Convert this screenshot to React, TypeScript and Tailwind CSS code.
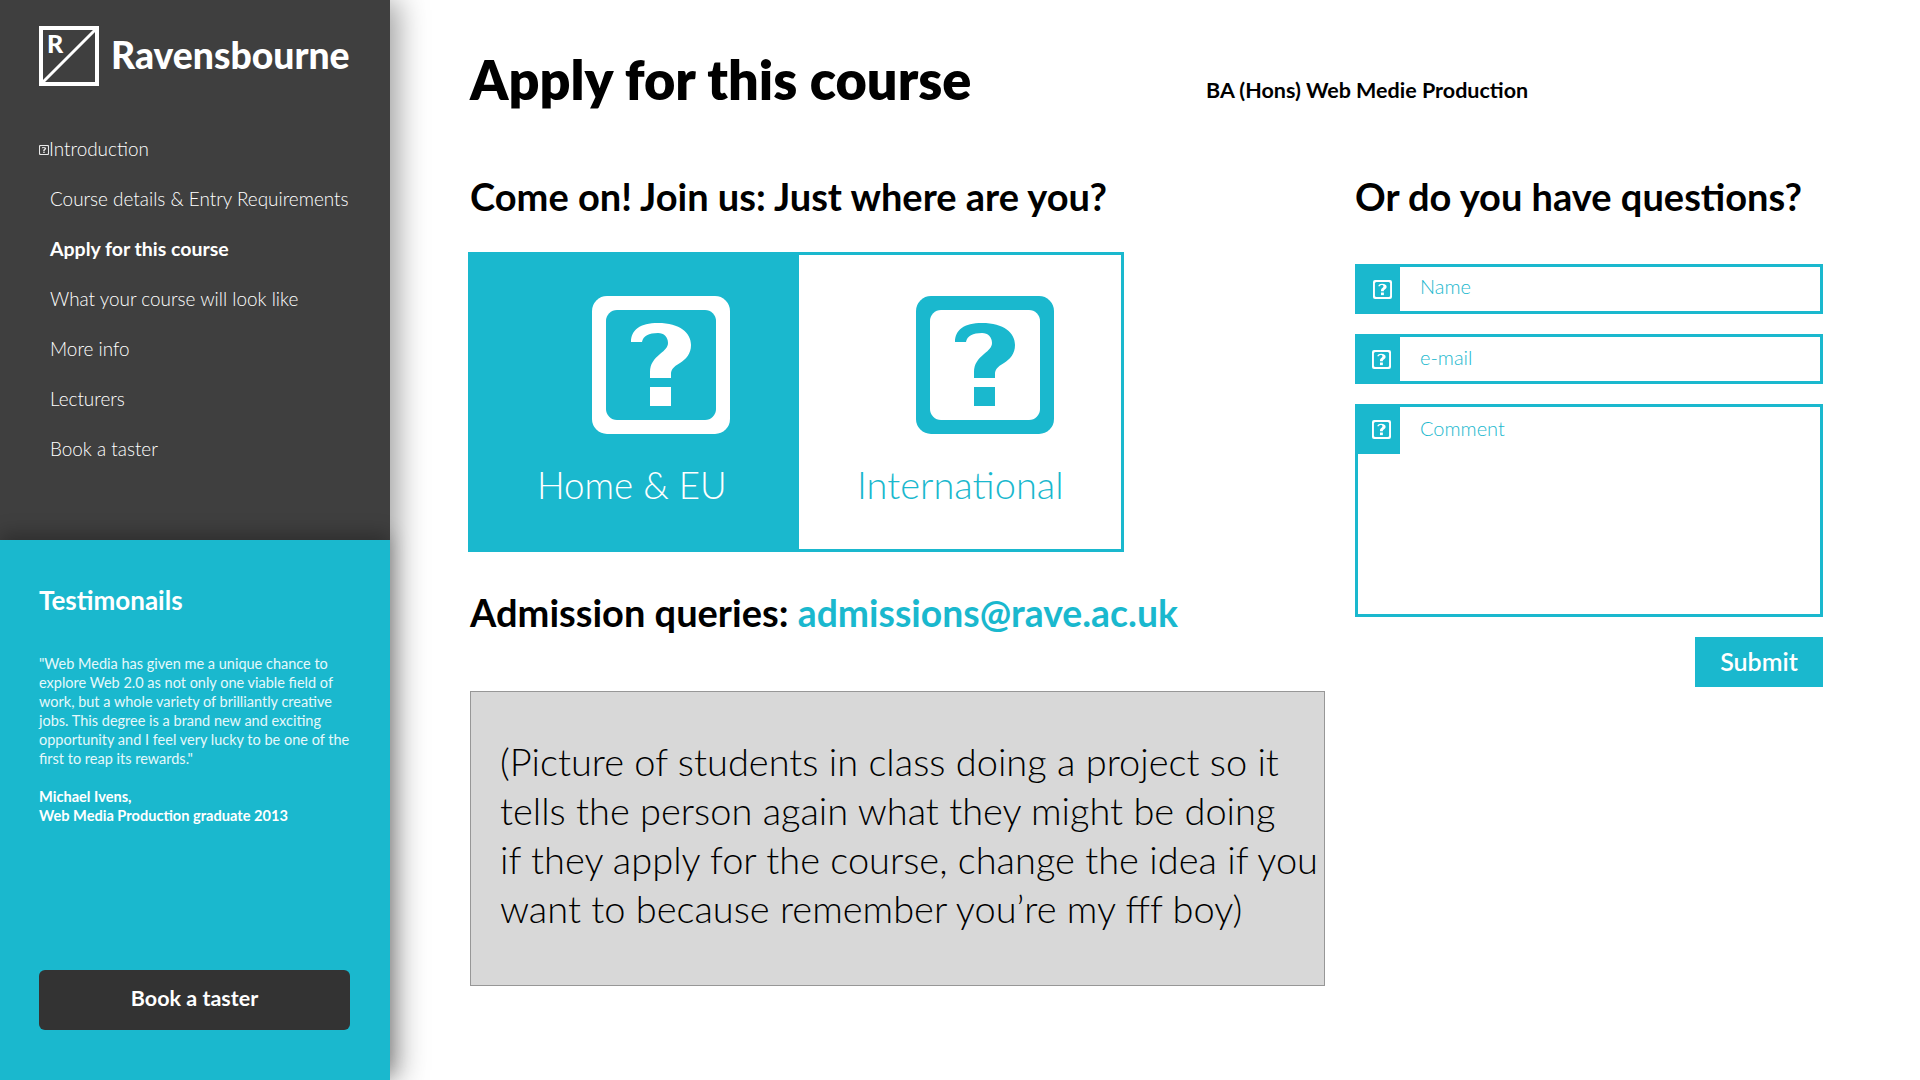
const NAV_ITEMS = [
  "Introduction",
  "Course details & Entry Requirements",
  "Apply for this course",
  "What your course will look like",
  "More info",
  "Lecturers",
  "Book a taster",
];

function QuestionIcon({ frame, glyph, className }: { frame: string; glyph: string; className: string }) {
  return (
    <svg viewBox="0 0 138 138" className={className}>
      <rect width="138" height="138" rx="15" fill={frame} />
      <rect x="14" y="14" width="110" height="110" rx="11" fill={glyph} />
      <path
        d="M39 46C39 34 48 27 66 27C88 27 99 37 99 49C99 58 94 63 88 67C81 71 79 74 79 78V82H58V76C58 68 62 63 68 58C73 54 76 51 76 47C76 41 72 37 66 37C57 37 51 40 50 46Z"
        fill={frame}
      />
      <rect x="58" y="91" width="21" height="19" fill={frame} />
    </svg>
  );
}

function Logo() {
  return (
    <svg viewBox="0 0 60 60" className="h-[60px] w-[60px] shrink-0">
      <rect x="2" y="2" width="56" height="56" fill="none" stroke="#fff" strokeWidth="4" />
      <path d="M3 57L57 3" stroke="#fff" strokeWidth="3" />
      <text x="8" y="27" fill="#fff" fontSize="25" fontWeight="900" fontFamily="Lato, sans-serif">
        R
      </text>
    </svg>
  );
}

function Sidebar() {
  return (
    <aside className="relative z-10 flex h-full w-[390px] shrink-0 flex-col shadow-[8px_0_28px_rgba(0,0,0,0.38)]">
      <div className="h-[540px] bg-[#3f3f3f] pl-[39px] pr-[30px] pt-[26px]">
        <div className="flex items-center gap-[12px]">
          <Logo />
          <span className="-mt-[2px] text-[37.3px] font-black leading-none text-white">Ravensbourne</span>
        </div>
        <nav className="mt-[38px] flex flex-col">
          {NAV_ITEMS.map((item, i) => (
            <a
              key={item}
              className={`flex h-[50px] items-center whitespace-nowrap text-white ${
                item === "Apply for this course" ? "text-[19.5px] font-bold" : "text-[18.9px] font-light"
              } ${i === 0 ? "" : "pl-[11px]"}`}
            >
              {i === 0 && <QuestionIcon frame="#e8e8e8" glyph="#3f3f3f" className="mt-[2px] h-[10px] w-[10px] shrink-0" />}
              {item}
            </a>
          ))}
        </nav>
      </div>
      <div className="relative flex flex-1 flex-col bg-[#1ab8ce] px-[39px] pb-[50px] pt-[43px] text-white shadow-[0_-6px_18px_rgba(0,0,0,0.28)]">
        <h3 className="text-[26px] font-bold leading-[34px]">Testimonails</h3>
        <p className="mt-[37px] w-[320px] text-[14.5px] font-normal leading-[19px] text-[#e6f8fb]">
          "Web Media has given me a unique chance to explore Web 2.0 as not only one viable field of work, but a whole
          variety of brilliantly creative jobs. This degree is a brand new and exciting opportunity and I feel very lucky
          to be one of the first to reap its rewards."
        </p>
        <p className="mt-[19px] text-[14.6px] font-bold leading-[19px]">
          Michael Ivens,
          <br />
          Web Media Production graduate 2013
        </p>
        <button className="mt-auto h-[60px] w-[311px] rounded-[6px] bg-[#333333] pb-[4px] text-[21.5px] font-bold text-white">
          Book a taster
        </button>
      </div>
    </aside>
  );
}

function FieldIcon({ tall, shift }: { tall?: boolean; shift: string }) {
  return (
    <div className={`flex h-[50px] w-[45px] shrink-0 items-center justify-center bg-[#1ab8ce] ${shift} ${tall ? "-ml-[3px] -mt-[3px]" : ""}`}>
      <QuestionIcon frame="#fff" glyph="#1ab8ce" className="h-[19px] w-[19px]" />
    </div>
  );
}

function ContactForm() {
  return (
    <form className="flex w-[468px] flex-col">
      <div className="mt-[46px] flex h-[50px] items-stretch border-[3px] border-[#1ab8ce] [&>div]:-my-[3px] [&>div]:-ml-[3px]">
        <FieldIcon shift="pl-[10px]" />
        <input
          placeholder="Name"
          className="min-w-0 flex-1 pb-[6px] pl-[20px] text-[20px] font-light text-[#1ab8ce] outline-none placeholder:text-[#1ab8ce]"
        />
      </div>
      <div className="mt-[20px] flex h-[50px] items-stretch border-[3px] border-[#1ab8ce] [&>div]:-my-[3px] [&>div]:-ml-[3px]">
        <FieldIcon shift="pl-[8px]" />
        <input
          placeholder="e-mail"
          className="min-w-0 flex-1 pb-[5px] pl-[20px] text-[20px] font-light text-[#1ab8ce] outline-none placeholder:text-[#1ab8ce]"
        />
      </div>
      <div className="mt-[20px] flex h-[213px] items-start border-[3px] border-[#1ab8ce]">
        <FieldIcon tall shift="pl-[8px]" />
        <textarea
          placeholder="Comment"
          className="h-full min-w-0 flex-1 resize-none pl-[20px] pt-[9px] text-[20px] font-light leading-[24px] text-[#1ab8ce] outline-none placeholder:text-[#1ab8ce]"
        />
      </div>
      <button type="button" className="mt-[20px] h-[50px] w-[128px] self-end bg-[#1ab8ce] text-[25px] font-semibold text-white">
        Submit
      </button>
    </form>
  );
}

export default function App() {
  return (
    <div className="flex h-screen overflow-hidden bg-white font-['Lato',sans-serif] text-black">
      <Sidebar />
      <main className="min-w-0 flex-1 pl-[80px] pt-[45px]">
        <div className="flex items-end">
          <h1 className="w-[736px] text-[54px] font-extrabold leading-[70px]">Apply for this course</h1>
          <p className="pb-[11px] text-[21.5px] font-bold leading-[28px]">BA (Hons) Web Medie Production</p>
        </div>
        <div className="mt-[59px] flex">
          <section className="w-[885px]">
            <h2 className="text-[38px] font-bold leading-[44px]">Come on! Join us: Just where are you?</h2>
            <div className="-ml-[2px] mt-[34px] flex h-[300px] w-[656px] border-[3px] border-[#1ab8ce]">
              <div className="w-[328px] bg-[#1ab8ce] pl-[121px] pt-[41px] text-white">
                <QuestionIcon frame="#fff" glyph="#1ab8ce" className="h-[138px] w-[138px]" />
                <div className="-ml-[55px] mt-[28px] text-[36.7px] font-light leading-[46px]">Home &amp; EU</div>
              </div>
              <div className="flex-1 pl-[117px] pt-[41px] text-[#1ab8ce]">
                <QuestionIcon frame="#1ab8ce" glyph="#fff" className="h-[138px] w-[138px]" />
                <div className="-ml-[59px] mt-[27px] text-[38px] font-light leading-[46px]">International</div>
              </div>
            </div>
            <p className="mt-[37px] text-[38px] font-bold leading-[46px]">
              Admission queries: <span className="text-[37.3px] text-[#1ab8ce]">admissions@rave.ac.uk</span>
            </p>
            <div className="mt-[55px] h-[295px] w-[855px] border border-[#979797] bg-[#d8d8d8] pl-[29px] pt-[45px] text-[38px] font-light leading-[49px]">
              (Picture of students in class doing a project so it
              <br />
              tells the person again what they might be doing
              <br />
              if they apply for the course, change the idea if you
              <br />
              want to because remember you’re my fff boy)
            </div>
          </section>
          <section>
            <h2 className="text-[38px] font-bold leading-[44px]">Or do you have questions?</h2>
            <ContactForm />
          </section>
        </div>
      </main>
    </div>
  );
}
